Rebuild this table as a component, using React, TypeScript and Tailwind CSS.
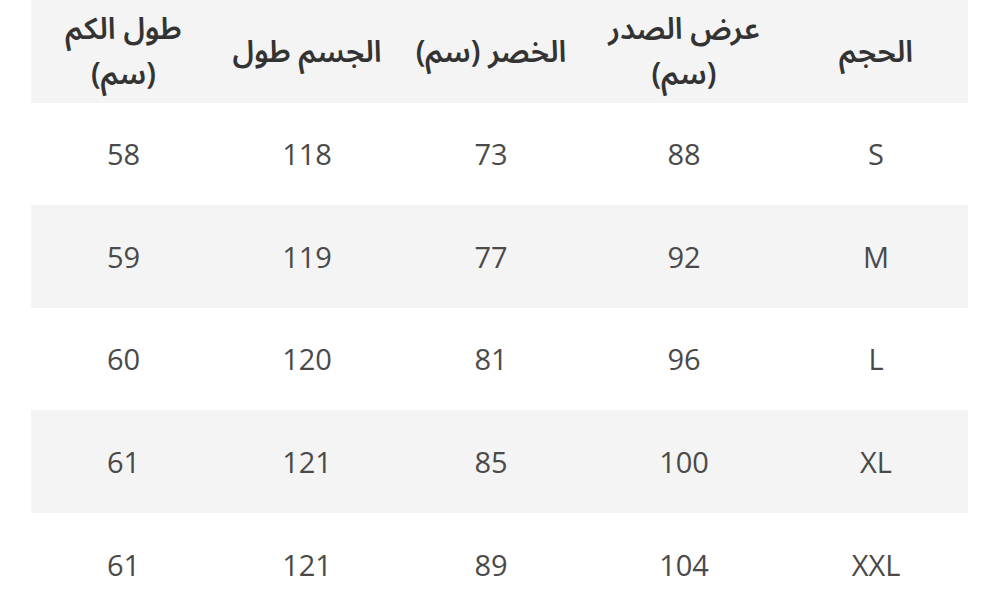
const headers: string[][] = [
  ["الحجم"],
  ["عرض الصدر", "(سم)"],
  ["الخصر (سم)"],
  ["الجسم طول"],
  ["طول الكم", "(سم)"],
];

const rows: string[][] = [
  ["S", "88", "73", "118", "58"],
  ["M", "92", "77", "119", "59"],
  ["L", "96", "81", "120", "60"],
  ["XL", "100", "85", "121", "61"],
  ["XXL", "104", "89", "121", "61"],
];

const cols = "grid-cols-[184px_200px_186px_182px_185px]";

export default function App() {
  return (
    <div className="h-[607px] w-[1000px] overflow-hidden bg-white">
      <div dir="rtl" className="mx-[31px] w-[937px]">
        <div className={`grid h-[102.6px] ${cols} items-center bg-[#f4f4f4] pt-[2px]`}>
          {headers.map((lines, i) => (
            <div
              key={i}
              className="text-center font-['Noto_Sans_Arabic','Noto_Sans',sans-serif] text-[30px] font-semibold leading-[45px] text-[#333]"
            >
              {lines.map((line) => (
                <div key={line}>{line}</div>
              ))}
            </div>
          ))}
        </div>
        {rows.map((row, r) => (
          <div
            key={row[0]}
            className={
              r % 2 === 1
                ? `grid h-[102.6px] ${cols} items-center bg-[#f4f4f4]`
                : `grid h-[102.6px] ${cols} items-center bg-white`
            }
          >
            {row.map((cell, i) => (
              <div
                key={i}
                className="text-center font-['Open_Sans',sans-serif] text-[29px] text-[#4a4a4a]"
              >
                {cell}
              </div>
            ))}
          </div>
        ))}
      </div>
    </div>
  );
}
